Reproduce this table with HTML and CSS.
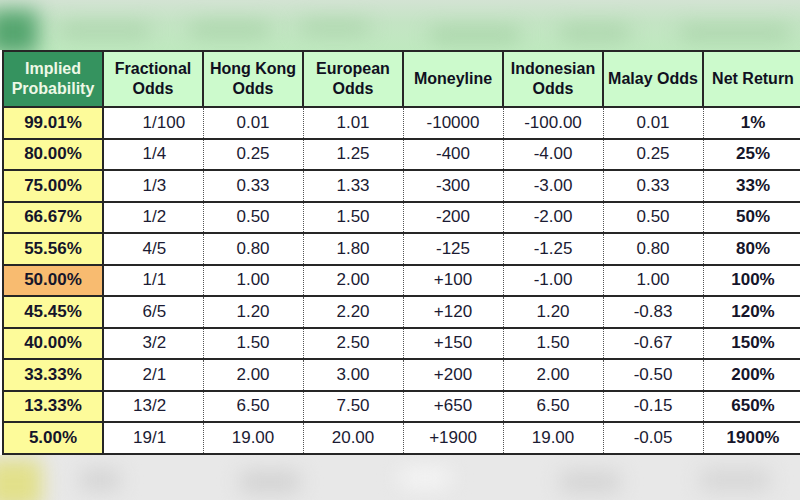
FILE: index.html
```html
<!DOCTYPE html>
<html>
<head>
<meta charset="utf-8">
<link rel="stylesheet" href="styles.css">
</head>
<body>
<div class="page">
  <div class="band-top">
    <div class="blob b1"></div>
    <div class="blob b2"></div>
    <div class="blob b3"></div>
    <div class="blob b4"></div>
    <div class="blob b5"></div>
    <div class="blob b6"></div>
    <div class="blob b7"></div>
  </div>
  <table class="odds">
    <colgroup>
      <col class="c"><col class="c"><col class="c"><col class="c"><col class="c"><col class="c"><col class="c"><col class="c">
    </colgroup>
    <thead>
      <tr>
        <th class="first">Implied<br>Probability</th>
        <th>Fractional<br>Odds</th>
        <th>Hong Kong<br>Odds</th>
        <th>European<br>Odds</th>
        <th>Moneyline</th>
        <th>Indonesian<br>Odds</th>
        <th>Malay Odds</th>
        <th>Net Return</th>
      </tr>
    </thead>
    <tbody>
      <tr><td class="prob">99.01%</td><td class="frac"><span class="num">1</span>/100</td><td>0.01</td><td>1.01</td><td>-10000</td><td>-100.00</td><td>0.01</td><td class="net">1%</td></tr>
      <tr><td class="prob">80.00%</td><td class="frac"><span class="num">1</span>/4</td><td>0.25</td><td>1.25</td><td>-400</td><td>-4.00</td><td>0.25</td><td class="net">25%</td></tr>
      <tr><td class="prob">75.00%</td><td class="frac"><span class="num">1</span>/3</td><td>0.33</td><td>1.33</td><td>-300</td><td>-3.00</td><td>0.33</td><td class="net">33%</td></tr>
      <tr><td class="prob">66.67%</td><td class="frac"><span class="num">1</span>/2</td><td>0.50</td><td>1.50</td><td>-200</td><td>-2.00</td><td>0.50</td><td class="net">50%</td></tr>
      <tr><td class="prob">55.56%</td><td class="frac"><span class="num">4</span>/5</td><td>0.80</td><td>1.80</td><td>-125</td><td>-1.25</td><td>0.80</td><td class="net">80%</td></tr>
      <tr><td class="prob even">50.00%</td><td class="frac"><span class="num">1</span>/1</td><td>1.00</td><td>2.00</td><td>+100</td><td>-1.00</td><td>1.00</td><td class="net">100%</td></tr>
      <tr><td class="prob">45.45%</td><td class="frac"><span class="num">6</span>/5</td><td>1.20</td><td>2.20</td><td>+120</td><td>1.20</td><td>-0.83</td><td class="net">120%</td></tr>
      <tr><td class="prob">40.00%</td><td class="frac"><span class="num">3</span>/2</td><td>1.50</td><td>2.50</td><td>+150</td><td>1.50</td><td>-0.67</td><td class="net">150%</td></tr>
      <tr><td class="prob">33.33%</td><td class="frac"><span class="num">2</span>/1</td><td>2.00</td><td>3.00</td><td>+200</td><td>2.00</td><td>-0.50</td><td class="net">200%</td></tr>
      <tr><td class="prob">13.33%</td><td class="frac"><span class="num">13</span>/2</td><td>6.50</td><td>7.50</td><td>+650</td><td>6.50</td><td>-0.15</td><td class="net">650%</td></tr>
      <tr><td class="prob">5.00%</td><td class="frac"><span class="num">19</span>/1</td><td>19.00</td><td>20.00</td><td>+1900</td><td>19.00</td><td>-0.05</td><td class="net">1900%</td></tr>
    </tbody>
  </table>
  <div class="band-bottom">
    <div class="blob y1"></div>
    <div class="blob g1"></div>
    <div class="blob g2"></div>
    <div class="blob g3"></div>
    <div class="blob g4"></div>
    <div class="blob g5"></div>
  </div>
</div>
</body>
</html>
```

FILE: styles.css
```css
html, body {
  margin: 0;
  padding: 0;
  background: #ffffff;
}
.page {
  width: 800px;
  height: 500px;
  overflow: hidden;
  position: relative;
  background: #ffffff;
  font-family: "Liberation Sans", Arial, sans-serif;
}
.band-top {
  height: 50px;
  position: relative;
  overflow: hidden;
  background: linear-gradient(to bottom, #d3e3d3 0%, #c4e4c4 45%, #bfe9bf 100%);
}
.band-bottom {
  height: 50px;
  position: relative;
  overflow: hidden;
  background: #e8e8e8;
}
.blob {
  position: absolute;
  filter: blur(10px);
  border-radius: 6px;
}
.b1 { left: -12px; top: 10px; width: 50px; height: 44px; background: #55a56f; }
.b2 { left: 60px; top: 26px; width: 90px; height: 10px; background: #a2cda2; }
.b3 { left: 190px; top: 24px; width: 80px; height: 12px; background: #a4d0a4; }
.b4 { left: 300px; top: 22px; width: 70px; height: 12px; background: #a8d2a8; }
.b5 { left: 430px; top: 30px; width: 90px; height: 10px; background: #9ccb9c; }
.b6 { left: 560px; top: 26px; width: 70px; height: 14px; background: #a8d2a8; }
.b7 { left: 680px; top: 28px; width: 110px; height: 10px; background: #a0cca0; }
.y1 { left: -14px; top: 4px; width: 56px; height: 50px; background: #e2e08a; }
.g1 { left: 80px; top: 14px; width: 40px; height: 22px; background: #d4d4d4; }
.g2 { left: 240px; top: 16px; width: 60px; height: 22px; background: #d2d2d2; }
.g3 { left: 400px; top: 12px; width: 50px; height: 22px; background: #f4f4f4; }
.g4 { left: 560px; top: 16px; width: 60px; height: 22px; background: #d4d4d4; }
.g5 { left: 700px; top: 14px; width: 70px; height: 22px; background: #d6d6d6; }

.odds {
  margin-left: 2px;
  border-collapse: collapse;
  table-layout: fixed;
  width: 802px;
  color: #1b1b33;
}
.odds col.c { width: 100px; }

.odds th {
  height: 54px;
  padding: 0;
  background: #ccfacc;
  border: 2px solid #262626;
  font-weight: bold;
  font-size: 16px;
  line-height: 20px;
  text-align: center;
  vertical-align: middle;
  color: #10101f;
}
.odds th.first {
  background: #35935f;
  color: #eef8e6;
}
.odds td {
  height: 29.5px;
  padding: 0;
  font-size: 17px;
  text-align: center;
  vertical-align: middle;
  border-top: 2px solid #262626;
  border-bottom: 2px solid #262626;
  border-left: 1px dotted #555555;
  border-right: 1px dotted #555555;
  background: #ffffff;
}
.odds td.prob {
  background: #fdfb9a;
  font-weight: bold;
  border-left: 2px solid #262626;
  border-right: 2px solid #262626;
  color: #15152a;
}
.odds td.prob.even {
  background: #f8bb70;
}
.odds td.frac {
  text-align: left;
  border-left: 2px solid #262626;
}
.odds td.frac .num {
  display: inline-block;
  width: 48px;
  text-align: right;
}
.odds td.net {
  font-weight: bold;
  color: #15152a;
}
```
